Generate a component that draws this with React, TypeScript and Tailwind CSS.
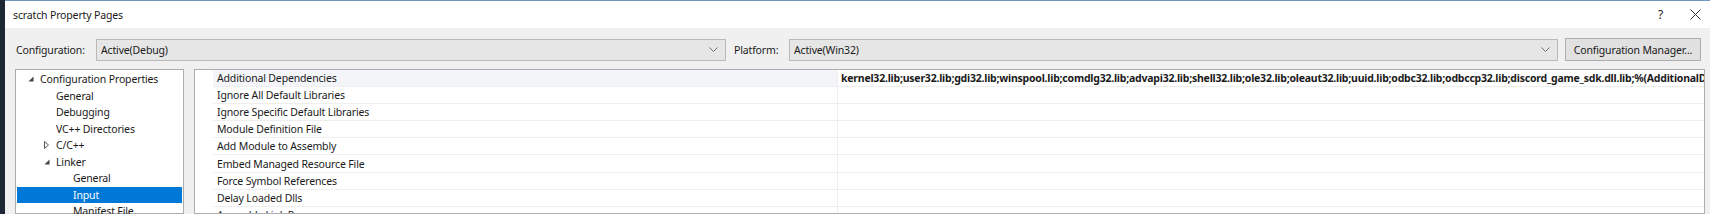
import React from "react";

const treeRows: { label: string; level: 0 | 1 | 2; arrow?: "open" | "closed"; selected?: boolean }[] = [
  { label: "Configuration Properties", level: 0, arrow: "open" },
  { label: "General", level: 1 },
  { label: "Debugging", level: 1 },
  { label: "VC++ Directories", level: 1 },
  { label: "C/C++", level: 1, arrow: "closed" },
  { label: "Linker", level: 1, arrow: "open" },
  { label: "General", level: 2 },
  { label: "Input", level: 2, selected: true },
  { label: "Manifest File", level: 2 },
];

const gridRows: { name: string; value?: string }[] = [
  {
    name: "Additional Dependencies",
    value:
      "kernel32.lib;user32.lib;gdi32.lib;winspool.lib;comdlg32.lib;advapi32.lib;shell32.lib;ole32.lib;oleaut32.lib;uuid.lib;odbc32.lib;odbccp32.lib;discord_game_sdk.dll.lib;%(AdditionalDependencies)",
  },
  { name: "Ignore All Default Libraries" },
  { name: "Ignore Specific Default Libraries" },
  { name: "Module Definition File" },
  { name: "Add Module to Assembly" },
  { name: "Embed Managed Resource File" },
  { name: "Force Symbol References" },
  { name: "Delay Loaded Dlls" },
  { name: "Assembly Link Resource" },
];

const indent: Record<number, string> = {
  0: "pl-[11px]",
  1: "pl-[27px]",
  2: "pl-[44px]",
};

function Chevron() {
  return (
    <svg width="9" height="5" viewBox="0 0 9 5" className="shrink-0">
      <path d="M0.5 0.5 L4.5 4.5 L8.5 0.5" fill="none" stroke="#707070" strokeWidth="1" />
    </svg>
  );
}

function Combo({ text, width }: { text: string; width: string }) {
  return (
    <div
      className={`${width} h-[22px] shrink-0 flex items-center bg-[#e6e6e6] border border-[#b9b9b9] pl-[4px] pr-[7px]`}
    >
      <span className="flex-1 whitespace-nowrap overflow-hidden">{text}</span>
      <Chevron />
    </div>
  );
}

function OpenArrow() {
  return (
    <svg width="6" height="6" viewBox="0 0 6 6" className="shrink-0">
      <path d="M5.5 0.5 L5.5 5.5 L0.5 5.5 Z" fill="#444" />
    </svg>
  );
}

function ClosedArrow() {
  return (
    <svg width="5" height="8" viewBox="0 0 5 8" className="shrink-0">
      <path d="M0.5 0.5 L4.5 4 L0.5 7.5 Z" fill="none" stroke="#555" strokeWidth="1" />
    </svg>
  );
}

export default function App() {
  return (
    <div className="w-[1710px] h-[214px] overflow-hidden flex bg-[#f0f0f0] text-[10.5px] tracking-[-0.15px] text-[#1a1a1a] font-['Noto_Sans',sans-serif] leading-[14px]">
      <div className="w-[5px] shrink-0 bg-[#1e2834]" />
      <div className="flex-1 flex flex-col min-w-0">
        {/* title bar */}
        <div className="h-[28px] shrink-0 bg-white border-t border-[#7097be] flex items-center pl-[8px]">
          <span className="whitespace-nowrap">scratch Property Pages</span>
          <span className="ml-auto mr-[27px] text-[12px] text-[#222]">?</span>
          <svg width="11" height="11" viewBox="0 0 11 11" className="mr-[9px]">
            <path d="M0.5 0.5 L10.5 10.5 M10.5 0.5 L0.5 10.5" stroke="#333" strokeWidth="1" />
          </svg>
        </div>

        {/* configuration row */}
        <div className="mt-[10px] flex items-center h-[23px] pl-[11px]">
          <span className="w-[80px] shrink-0 whitespace-nowrap">Configuration:</span>
          <Combo text="Active(Debug)" width="w-[630px]" />
          <span className="ml-[8px] w-[55px] shrink-0 whitespace-nowrap">Platform:</span>
          <Combo text="Active(Win32)" width="w-[769px]" />
          <div className="ml-[7px] w-[136px] h-[23px] shrink-0 flex items-center justify-center bg-[#e1e1e1] border border-[#adadad] whitespace-nowrap">
            Configuration Manager...
          </div>
        </div>

        {/* panels */}
        <div className="mt-[8px] flex pl-[10px] flex-1 min-h-0">
          <div className="w-[169px] shrink-0 bg-white border border-[#abadb3] p-[1px]">
            {treeRows.map((r, i) => (
              <div
                key={i}
                className={`h-[16.5px] flex items-center ${indent[r.level]} ${
                  r.selected ? "bg-[#0078d7] text-white" : ""
                }`}
              >
                <span className="w-[12px] shrink-0 flex items-center">
                  {r.arrow === "open" ? <OpenArrow /> : r.arrow === "closed" ? <ClosedArrow /> : null}
                </span>
                <span className="whitespace-nowrap">{r.label}</span>
              </div>
            ))}
          </div>

          <div className="ml-[10px] w-[1511px] shrink-0 bg-white border border-[#abadb3] overflow-hidden">
            {gridRows.map((r, i) => (
              <div key={i} className="h-[17.1px] flex">
                <div className="w-[18px] shrink-0" />
                <div
                  className={`w-[624px] shrink-0 flex items-center pl-[4px] border-b border-[#eeeeee] ${
                    i === 0 ? "bg-[#f3f5f8]" : ""
                  }`}
                >
                  <span className="whitespace-nowrap">{r.name}</span>
                </div>
                <div className="flex-1 min-w-0 flex items-center pl-[3px] border-b border-l border-[#eeeeee] overflow-hidden">
                  {r.value ? (
                    <span className="whitespace-nowrap font-bold tracking-[-0.22px]">{r.value}</span>
                  ) : null}
                </div>
              </div>
            ))}
          </div>
        </div>
      </div>
    </div>
  );
}
